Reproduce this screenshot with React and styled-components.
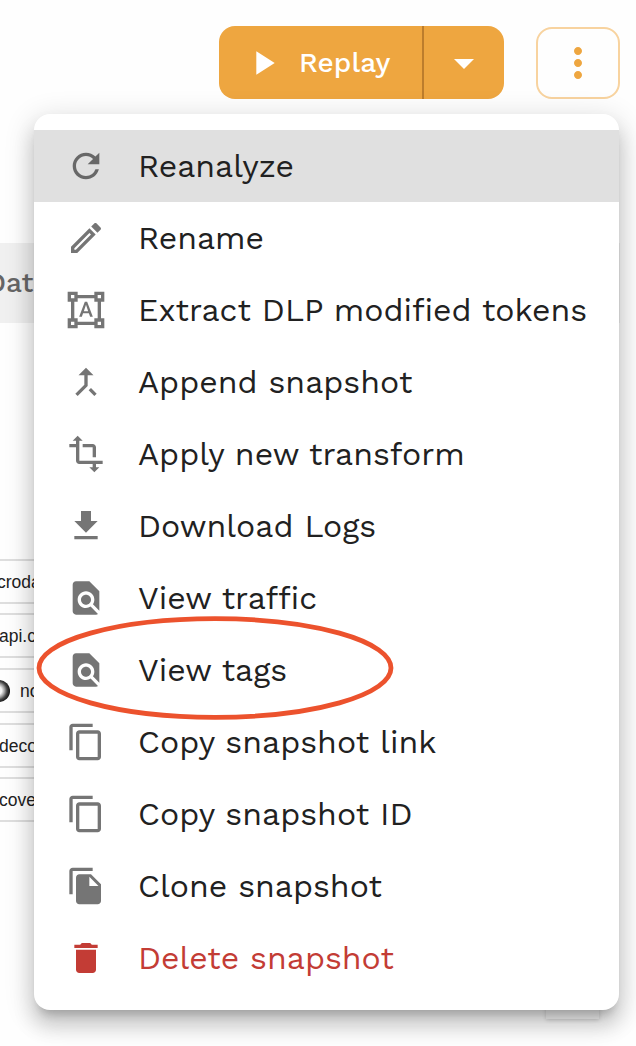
import React from "react";
import styled, { createGlobalStyle } from "styled-components";
import {
  MdRefresh,
  MdFormatShapes,
  MdCallMerge,
  MdTransform,
  MdFindInPage,
  MdPlayArrow,
  MdArrowDropDown,
  MdMoreVert,
} from "react-icons/md";

const GlobalStyle = createGlobalStyle`
  * { box-sizing: border-box; }
  body { margin: 0; background: #fff; }
`;

const uiFont = `"Work Sans", "Open Sans", "Noto Sans", sans-serif`;

const Page = styled.div`
  position: relative;
  width: 636px;
  height: 1046px;
  overflow: hidden;
  background: #fefefe;
  font-family: ${uiFont};
`;

const Toolbar = styled.header`
  display: flex;
  justify-content: flex-end;
  align-items: flex-start;
  gap: 32px;
  height: 243px;
  padding: 26px 16px 0 0;
`;

const SplitButton = styled.div`
  display: flex;
  width: 285px;
  height: 73px;
  border-radius: 16px;
  overflow: hidden;
  background: #eea640;
  color: #fff;
`;

const ReplayButton = styled.button`
  display: flex;
  align-items: center;
  gap: 16.5px;
  width: 205px;
  padding: 0 0 0 23.5px;
  border: 0;
  border-right: 2px solid #bd7d2c;
  background: none;
  color: inherit;
  font: 500 28px/36px ${uiFont};
  letter-spacing: 0.1px;
`;

const ArrowButton = styled.button`
  display: flex;
  align-items: center;
  justify-content: center;
  flex: 1;
  padding: 0;
  border: 0;
  background: none;
  color: inherit;
`;

const MoreButton = styled.button`
  display: flex;
  align-items: center;
  justify-content: center;
  width: 84px;
  height: 72px;
  margin-top: 1px;
  padding: 0;
  border: 2px solid #f8d39f;
  border-radius: 16px;
  background: #fefefe;
  color: #eea640;
`;

const TableHead = styled.div`
  display: flex;
  align-items: center;
  width: 620px;
  height: 80px;
  padding-bottom: 2px;
  background: #f0f0f0;
  color: #666;
  font-size: 28px;
  font-weight: 500;

  span { margin-left: -14px; }
`;

const ChipList = styled.div`
  display: flex;
  flex-direction: column;
  gap: 9.5px;
  padding-top: 235.5px;
  width: 300px;
`;

const Chip = styled.div`
  display: flex;
  align-items: center;
  gap: 10px;
  height: 45.2px;
  border: solid #dedede;
  border-width: 2px 0;
  color: #222;
  font: 17.5px/20px "Liberation Sans", Arial, sans-serif;

  span { margin: 1px 0 0 ${(p) => p.$shift || 0}px; }
`;

const Orb = styled.i`
  width: 22px;
  height: 22px;
  margin: 1px 0 0 -12px;
  border-radius: 50%;
  background: radial-gradient(circle at 44% 48%, #f4f4f4 0 24%, #999 42%, #444 56%, #151515 72%);
`;

const FooterButton = styled.div`
  width: 53px;
  height: 40px;
  margin: 157px 0 0 546px;
  background: #fafafa;
  box-shadow: 0 1px 4px rgba(0, 0, 0, 0.18);
`;

const Menu = styled.ul`
  position: absolute;
  left: 34px;
  top: 114px;
  width: 585px;
  height: 896px;
  margin: 0;
  padding: 16px 0;
  list-style: none;
  border-radius: 16px;
  background: #fff;
  box-shadow:
    0 10px 10px -6px rgba(0, 0, 0, 0.2),
    0 16px 20px 2px rgba(0, 0, 0, 0.14),
    0 6px 28px 4px rgba(0, 0, 0, 0.12);
`;

const MenuItem = styled.li`
  display: flex;
  align-items: center;
  gap: 32px;
  height: 72px;
  padding-left: 32px;
  background: ${(p) => (p.$active ? "#e0e0e0" : "transparent")};
  color: ${(p) => (p.$danger ? "#c33c35" : "#212121")};

  svg {
    flex: none;
    width: 40px;
    height: 40px;
    color: ${(p) => (p.$danger ? "#c33c35" : p.$active ? "#686868" : "#757575")};
  }
`;

const Label = styled.span`
  font-size: 32px;
  line-height: 48px;
  white-space: nowrap;
`;

const Highlight = styled.svg`
  position: absolute;
  left: 34px;
  top: 612px;
  width: 364px;
  height: 112px;
`;

const Glyph = ({ d }) => (
  <svg viewBox="0 0 24 24" fill="currentColor">
    <path d={d} />
  </svg>
);

const EditIcon = () => (
  <Glyph d="M14.06 9.02l.92.92L5.92 19H5v-.92l9.06-9.06M17.66 3c-.25 0-.51.1-.7.29l-1.83 1.83 3.75 3.75 1.83-1.83c.39-.39.39-1.02 0-1.41l-2.34-2.34c-.2-.2-.45-.29-.71-.29zm-3.6 3.19L3 17.25V21h3.75L17.81 9.94l-3.75-3.75z" />
);
const DownloadIcon = () => (
  <Glyph d="M19 9h-4V3H9v6H5l7 7 7-7zM5 18v2h14v-2H5z" />
);
const CopyIcon = () => (
  <Glyph d="M16 1H4c-1.1 0-2 .9-2 2v14h2V3h12V1zm3 4H8c-1.1 0-2 .9-2 2v14c0 1.1.9 2 2 2h11c1.1 0 2-.9 2-2V7c0-1.1-.9-2-2-2zm0 16H8V7h11v14z" />
);
const CloneIcon = () => (
  <Glyph d="M16 1H4c-1.1 0-2 .9-2 2v14h2V3h12V1zm-1 4l6 6v10c0 1.1-.9 2-2 2H7.99C6.89 23 6 22.1 6 21l.01-14c0-1.1.89-2 1.99-2h7zm-1 7h5.5L14 6.5V12z" />
);
const DeleteIcon = () => (
  <Glyph d="M6 19c0 1.1.9 2 2 2h8c1.1 0 2-.9 2-2V7H6v12zM19 4h-3.5l-1-1h-5l-1 1H5v2h14V4z" />
);

const items = [
  { label: "Reanalyze", icon: MdRefresh, active: true },
  { label: "Rename", icon: EditIcon },
  { label: "Extract DLP modified tokens", icon: MdFormatShapes },
  { label: "Append snapshot", icon: MdCallMerge },
  { label: "Apply new transform", icon: MdTransform },
  { label: "Download Logs", icon: DownloadIcon },
  { label: "View traffic", icon: MdFindInPage },
  { label: "View tags", icon: MdFindInPage },
  { label: "Copy snapshot link", icon: CopyIcon },
  { label: "Copy snapshot ID", icon: CopyIcon },
  { label: "Clone snapshot", icon: CloneIcon },
  { label: "Delete snapshot", icon: DeleteIcon, danger: true },
];

export default function App() {
  return (
    <Page>
      <GlobalStyle />
      <Toolbar>
        <SplitButton>
          <ReplayButton>
            <MdPlayArrow size={40} />
            Replay
          </ReplayButton>
          <ArrowButton>
            <MdArrowDropDown size={48} />
          </ArrowButton>
        </SplitButton>
        <MoreButton>
          <MdMoreVert size={48} />
        </MoreButton>
      </Toolbar>
      <TableHead>
        <span>Dat</span>
      </TableHead>
      <ChipList>
        <Chip $shift={-3}><span>croda</span></Chip>
        <Chip $shift={-1}><span>api.c</span></Chip>
        <Chip><Orb /><span>no</span></Chip>
        <Chip $shift={-1}><span>deco</span></Chip>
        <Chip $shift={-1}><span>cove</span></Chip>
      </ChipList>
      <FooterButton />
      <Menu>
        {items.map(({ label, icon: Icon, active, danger }) => (
          <MenuItem key={label} $active={active} $danger={danger}>
            <Icon />
            <Label>{label}</Label>
          </MenuItem>
        ))}
      </Menu>
      <Highlight viewBox="0 0 364 112">
        <ellipse cx="181" cy="56" rx="176" ry="49.3" fill="none" stroke="#ec522d" strokeWidth="4.8" />
      </Highlight>
    </Page>
  );
}
